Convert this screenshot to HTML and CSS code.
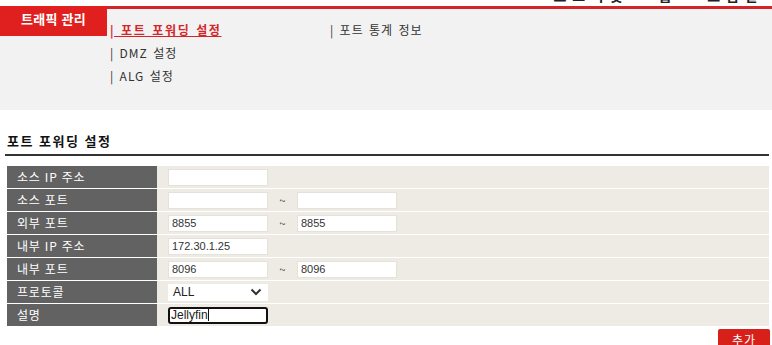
FILE: index.html
```html
<!DOCTYPE html>
<html lang="ko">
<head>
<meta charset="utf-8">
<title>포트 포워딩 설정</title>
<link rel="stylesheet" href="styles.css">
</head>
<body>
<div class="topbar"><span class="top-text">로그아웃 &nbsp; 홈 &nbsp; 도움말</span></div>
<div class="nav">
  <div class="nav-side"><div class="tab">트래픽 관리</div></div>
  <div class="nav-menu">
    <a class="item active">| 포트 포워딩 설정</a>
    <a class="item">| 포트 통계 정보</a>
    <a class="item">| DMZ 설정</a>
    <span></span>
    <a class="item">| ALG 설정</a>
  </div>
</div>

<h2 class="title">포트 포워딩 설정</h2>

<div class="form">
  <div class="row"><div class="label">소스 IP 주소</div><div class="value"><input class="field" type="text"></div></div>
  <div class="row"><div class="label">소스 포트</div><div class="value"><input class="field" type="text"><span class="tilde">~</span><input class="field" type="text"></div></div>
  <div class="row"><div class="label">외부 포트</div><div class="value"><input class="field" type="text" value="8855"><span class="tilde">~</span><input class="field" type="text" value="8855"></div></div>
  <div class="row"><div class="label">내부 IP 주소</div><div class="value"><input class="field" type="text" value="172.30.1.25"></div></div>
  <div class="row"><div class="label">내부 포트</div><div class="value"><input class="field" type="text" value="8096"><span class="tilde">~</span><input class="field" type="text" value="8096"></div></div>
  <div class="row"><div class="label">프로토콜</div><div class="value"><div class="select"><span>ALL</span><svg width="12" height="8" viewBox="0 0 12 8"><path d="M1.5 1.5 L6 6 L10.5 1.5" fill="none" stroke="#333" stroke-width="2"/></svg></div></div></div>
  <div class="row"><div class="label">설명</div><div class="value"><div class="field focus">Jellyfin<span class="caret"></span></div></div></div>
</div>
<div class="actions"><button class="btn">추가</button></div>
</body>
</html>
```

FILE: styles.css
```css
* { box-sizing: border-box; }
html, body { margin: 0; padding: 0; background: #fff; }
body {
  font-family: "Noto Sans CJK KR", "Noto Sans", sans-serif;
  font-size: 12px;
  color: #222;
  width: 772px;
  height: 345px;
  overflow: hidden;
}
.topbar {
  height: 5px;
  overflow: hidden;
  display: flex;
  justify-content: flex-end;
  padding-right: 8px;
}
.top-text {
  font-size: 14px;
  font-weight: bold;
  color: #222;
  line-height: 14px;
  margin-top: -12px;
  letter-spacing: 6px;
}
.nav {
  display: flex;
  background: #f2f2f2;
  height: 104px;
  margin-top: 1px;
}
.nav-side { width: 107px; }
.tab {
  background: #e0201e;
  color: #fff;
  height: 30px;
  padding-top: 4px;
  text-align: center;
  font-weight: bold;
  font-size: 13px;
  line-height: 18px;
  letter-spacing: 0.3px;
}
.nav-menu {
  flex: 1;
  border-top: 3px solid #d4262a;
  display: grid;
  grid-template-columns: 220px 220px;
  grid-auto-rows: 23px;
  align-content: start;
  padding: 9px 0 0 3px;
}
.item {
  line-height: 23px;
  font-size: 12px;
  color: #333;
  white-space: nowrap;
  letter-spacing: 1px;
  word-spacing: 1px;
}
.active {
  color: #d4262a;
  font-weight: bold;
  text-decoration: underline;
  letter-spacing: 1.6px;
}
.title {
  margin: 22px 3px 0 5px;
  padding: 0 0 4px 2px;
  font-size: 13px;
  line-height: 18px;
  font-weight: bold;
  color: #111;
  border-bottom: 2px solid #333;
  letter-spacing: 1.5px;
}
.form {
  margin: 10px 3px 0 7px;
  display: flex;
  flex-direction: column;
  gap: 1px;
}
.row {
  display: flex;
  height: 22px;
}
.label {
  width: 150px;
  background: #626262;
  color: #fff;
  padding-left: 10px;
  line-height: 22px;
  font-size: 12px;
  letter-spacing: 0.8px;
}
.value {
  flex: 1;
  background: #edebe3;
  display: flex;
  align-items: center;
  padding-left: 11px;
}
.field {
  width: 100px;
  height: 17px;
  border: 1px solid #e4e2da;
  background: #fff;
  font-family: "Liberation Sans", sans-serif;
  font-size: 11px;
  color: #333;
  padding: 0 3px;
  outline: none;
  display: flex;
  align-items: center;
}
.tilde {
  width: 29px;
  text-align: center;
  font-size: 11px;
  color: #333;
}
.select {
  width: 100px;
  height: 17px;
  background: #fff;
  display: flex;
  align-items: center;
  justify-content: space-between;
  padding: 0 6px 0 5px;
  font-family: "Liberation Sans", sans-serif;
  font-size: 12px;
  color: #222;
}
.focus {
  border: 2px solid #111;
  border-radius: 3px;
  padding: 0 1px;
  color: #222;
  font-size: 12px;
}
.caret {
  display: inline-block;
  width: 1px;
  height: 12px;
  background: #111;
}
.actions {
  display: flex;
  justify-content: flex-end;
  padding: 3px 2px 0 0;
}
.btn {
  background: #d8201a;
  color: #fff;
  border: none;
  border-radius: 2px;
  width: 52px;
  height: 20px;
  font-family: "Noto Sans CJK KR", sans-serif;
  font-size: 12px;
  padding: 0;
  letter-spacing: 1px;
}
```
